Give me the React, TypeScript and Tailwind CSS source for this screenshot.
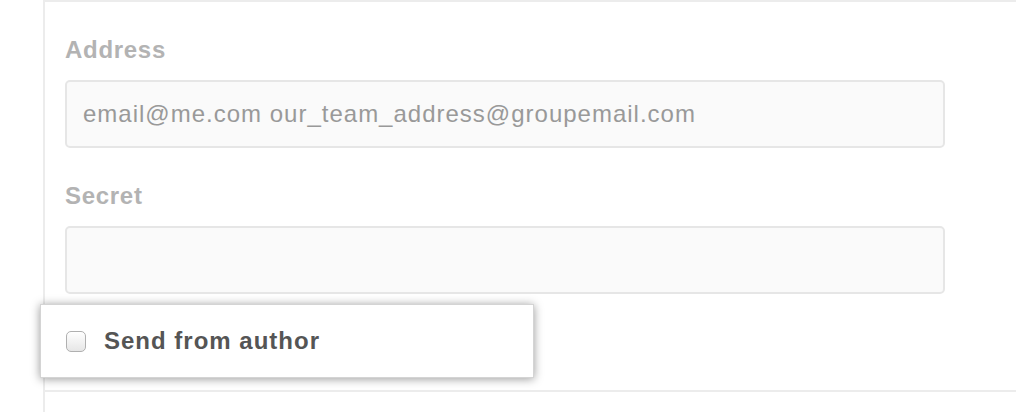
import React from "react";

export default function App() {
  return (
    <div className="w-[1016px] h-[412px] bg-white overflow-hidden font-['Liberation_Sans',Arial,sans-serif]">
      <div className="ml-[43px] h-full border-l-2 border-t-2 border-[#ececec]">
        <div className="pl-[20px] pt-[33px] pb-[12px] border-b-2 border-[#ececec] w-[1100px]">
          {/* Address */}
          <label className="block text-[24px] font-bold tracking-[0.7px] text-[#b3b3b3] leading-[29px]">Address</label>
          <div className="mt-[16px] w-[880px] h-[68px] rounded-[5px] border-2 border-[#e6e6e6] bg-[#fafafa] flex items-center px-[16px]">
            <span className="text-[24px] tracking-[1px] text-[#999999]">email@me.com our_team_address@groupemail.com</span>
          </div>

          {/* Secret */}
          <label className="block mt-[33px] text-[24px] font-bold tracking-[0.7px] text-[#b3b3b3] leading-[29px]">Secret</label>
          <div className="mt-[16px] w-[880px] h-[68px] rounded-[5px] border-2 border-[#e6e6e6] bg-[#fafafa]" />

          {/* Send from author, highlighted */}
          <div className="relative mt-[10px] -ml-[25px] w-[494px] h-[74px] bg-white border border-[#d4d4d4] shadow-[0_1px_9px_rgba(0,0,0,0.4)] flex items-center pl-[25px]">
            <span className="w-[20px] h-[21px] rounded-[5px] border border-[#b0b0b0] bg-gradient-to-b from-white to-[#e6e6e6] shadow-[inset_0_1px_1px_rgba(255,255,255,0.8)]" />
            <span className="ml-[18px] text-[24px] font-bold tracking-[1px] text-[#555555]">Send from author</span>
          </div>
        </div>
      </div>
    </div>
  );
}
